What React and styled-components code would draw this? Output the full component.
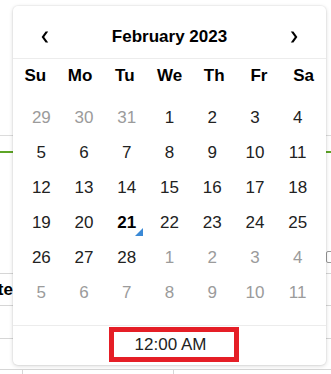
import styled, { createGlobalStyle } from 'styled-components';

const GlobalStyle = createGlobalStyle`
  html, body {
    margin: 0;
    padding: 0;
    background: #ffffff;
  }
  body {
    font-family: 'Liberation Sans', Arial, sans-serif;
  }
`;

const Page = styled.div`
  position: relative;
  width: 331px;
  height: 374px;
  overflow: hidden;
  background: #ffffff;
`;

// page content sitting behind the picker
const TopArea = styled.div`
  height: 135px;
  border-bottom: 1px solid #dcdcdc;
`;

const Field = styled.div`
  height: 15px;
  border-bottom: 2px solid #5da526;
`;

const Section = styled.div`
  height: 120px;
  display: flex;
  justify-content: flex-end;
  align-items: flex-end;
  padding-bottom: 10px;
  box-sizing: border-box;
`;

const CheckEdge = styled.span`
  width: 8px;
  height: 10px;
  border: 1px solid #9a9a9a;
  border-radius: 2px;
  margin-right: -5px;
`;

const TableRow = styled.div`
  display: flex;
  height: ${props => props.h}px;
  border-top: 1px solid #d6d6d6;
  box-sizing: border-box;
`;

const LabelCell = styled.div`
  width: 13px;
  overflow: hidden;
  display: flex;
  justify-content: flex-end;
  align-items: center;
  font-weight: bold;
  font-size: 17px;
  color: #000;
  white-space: nowrap;
`;

const Cell = styled.div`
  width: ${props => props.w}px;
  border-left: 1px solid #d6d6d6;
`;

// the date picker
const Popup = styled.div`
  position: absolute;
  left: 13px;
  top: 6px;
  width: 313px;
  height: 359px;
  background: #ffffff;
  border-radius: 5px;
  box-shadow: 0 1px 4px rgba(0, 0, 0, 0.16), 0 0 0 1px rgba(0, 0, 0, 0.03);
  display: flex;
  flex-direction: column;
  box-sizing: border-box;
`;

const Header = styled.div`
  height: 53px;
  box-sizing: border-box;
  padding: 9px 28px 0 28px;
  border-bottom: 1px solid #ececec;
  display: flex;
  align-items: center;
  justify-content: space-between;
`;

const Title = styled.div`
  font-size: 17px;
  font-weight: bold;
  color: #000;
`;

const NavButton = styled.button`
  border: none;
  background: none;
  padding: 0;
  width: 8px;
  height: 12px;
  display: flex;
  align-items: center;
  justify-content: center;
  cursor: pointer;
`;

const DayNames = styled.div`
  display: grid;
  grid-template-columns: repeat(7, 1fr);
  height: 34px;
  margin-bottom: 7px;
`;

const DayName = styled.div`
  display: flex;
  align-items: center;
  justify-content: center;
  font-size: 17px;
  font-weight: bold;
  color: #000;
`;

const Dates = styled.div`
  display: grid;
  grid-template-columns: repeat(7, 1fr);
  grid-auto-rows: 35px;
  padding: 0 7px 15px 7px;
`;

const DateCell = styled.div`
  position: relative;
  display: flex;
  align-items: center;
  justify-content: center;
  font-size: 17px;
  font-weight: ${props => (props.selected ? 'bold' : 'normal')};
  color: ${props => (props.muted ? '#9b9b9b' : props.selected ? '#000' : '#222')};
  cursor: pointer;
`;

const Marker = styled.span`
  position: absolute;
  right: 5px;
  bottom: 4px;
  width: 0;
  height: 0;
  border-left: 8px solid transparent;
  border-bottom: 8px solid #3a89d6;
`;

const Footer = styled.div`
  border-top: 1px solid #ececec;
  padding-top: 1px;
  display: flex;
  justify-content: center;
`;

const TimeBox = styled.div`
  width: 130px;
  height: 35px;
  box-sizing: border-box;
  margin-left: 8px;
  border: 5px solid #e51e26;
  display: flex;
  align-items: center;
  justify-content: center;
  padding-right: 6px;
  font-size: 17px;
  color: #222;
`;

const Chevron = ({ dir }) => (
  <svg width="8" height="12" viewBox="0 0 8 12">
    <path
      d={dir === 'left'
        ? 'M7.2 0.5 L3.2 6 L7.2 11.5 H4.6 L0.6 6 L4.6 0.5 Z'
        : 'M0.8 0.5 L4.8 6 L0.8 11.5 H3.4 L7.4 6 L3.4 0.5 Z'}
      fill="#000"
    />
  </svg>
);

const weekDays = ['Su', 'Mo', 'Tu', 'We', 'Th', 'Fr', 'Sa'];

const buildDays = () => {
  const days = [];
  [29, 30, 31].forEach(d => days.push({ d, muted: true }));
  for (let d = 1; d <= 28; d++) days.push({ d, muted: false, selected: d === 21 });
  for (let d = 1; d <= 11; d++) days.push({ d, muted: true });
  return days;
};

const App = () => {
  const days = buildDays();
  return (
    <Page>
      <GlobalStyle />
      <TopArea />
      <Field />
      <Section>
        <CheckEdge />
      </Section>
      <TableRow h={32}>
        <LabelCell>Date</LabelCell>
      </TableRow>
      <TableRow h={33} />
      <TableRow h={31} />
      <TableRow h={10}>
        <Cell w={22} style={{ borderLeft: 'none' }} />
        <Cell w={150} />
        <Cell w={150} />
      </TableRow>

      <Popup>
        <Header>
          <NavButton aria-label="Previous month"><Chevron dir="left" /></NavButton>
          <Title>February 2023</Title>
          <NavButton aria-label="Next month"><Chevron dir="right" /></NavButton>
        </Header>
        <DayNames>
          {weekDays.map(w => <DayName key={w}>{w}</DayName>)}
        </DayNames>
        <Dates>
          {days.map((day, i) => (
            <DateCell key={i} muted={day.muted} selected={day.selected}>
              {day.d}
              {day.selected && <Marker />}
            </DateCell>
          ))}
        </Dates>
        <Footer>
          <TimeBox>12:00 AM</TimeBox>
        </Footer>
      </Popup>
    </Page>
  );
};

export default App;
